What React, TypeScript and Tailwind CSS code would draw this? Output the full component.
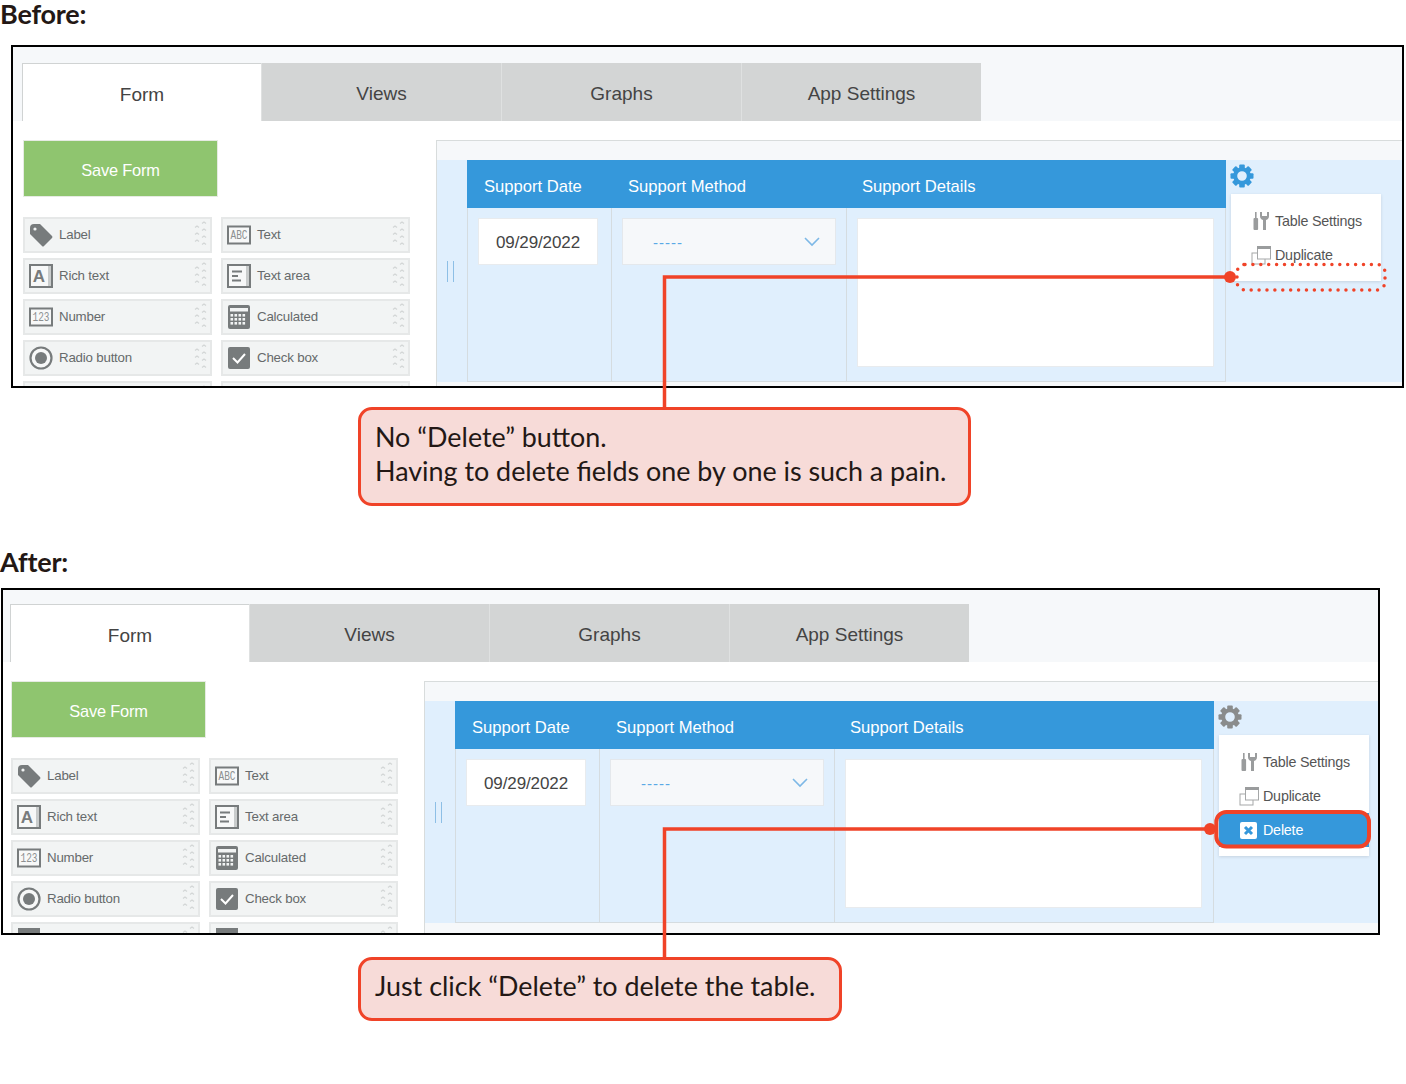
import React from "react";

const ui = { fontFamily: '"Liberation Sans", Arial, sans-serif' };
const note = { fontFamily: 'Lato, "Open Sans", sans-serif' };
const ICON = "#777b7c";

function Gear({ color }: { color: string }) {
  return (
    <svg width="26" height="26" viewBox="0 0 26 26">
      {[0, 45, 90, 135, 180, 225, 270, 315].map((a) => (
        <rect key={a} x="10.2" y="1.5" width="5.6" height="6" rx="1" fill={color} transform={`rotate(${a} 13 13)`} />
      ))}
      <circle cx="13" cy="13" r="6.8" fill="none" stroke={color} strokeWidth="4" />
    </svg>
  );
}

function FieldIcon({ kind }: { kind: string }) {
  const frame = (inner: React.ReactNode, h = 24) => (
    <svg width="24" height="24" viewBox="0 0 24 24">
      <rect x="1" y={(24 - h) / 2 + 1} width="22" height={h - 2} fill="#f7f8f8" stroke={ICON} strokeWidth="2" />
      {inner}
    </svg>
  );
  const small = { fontFamily: '"Liberation Mono", monospace', fontSize: 12, fill: "#8d9091" };
  switch (kind) {
    case "label":
      return (
        <svg width="24" height="24" viewBox="0 0 24 24">
          <path d="M1 5 Q1 1 5 1 L11 1 L23 13 Q24 14 23 15 L15 23 Q14 24 13 23 L1 11 Z" fill={ICON} />
          <circle cx="6" cy="6" r="1.6" fill="#f2f4f4" />
        </svg>
      );
    case "abc":
      return frame(<text x="12" y="16" textAnchor="middle" style={small} textLength="17" lengthAdjust="spacingAndGlyphs">ABC</text>, 19);
    case "a":
      return frame(
        <>
          <rect x="19" y="2" width="3" height="20" fill="#c9cccc" />
          <text x="10" y="18" textAnchor="middle" style={{ ...ui, fontSize: 17, fontWeight: 700, fill: ICON }}>A</text>
        </>
      );
    case "123":
      return frame(<text x="12" y="16" textAnchor="middle" style={small} textLength="17" lengthAdjust="spacingAndGlyphs">123</text>, 19);
    case "area":
      return frame(
        <>
          <rect x="19" y="2" width="3" height="20" fill="#c9cccc" />
          <path d="M5 7.5H15M5 12H11M5 16.5H14" stroke={ICON} strokeWidth="1.8" />
        </>
      );
    case "calc":
      return (
        <svg width="24" height="24" viewBox="0 0 24 24">
          <rect x="1" y="0" width="22" height="24" rx="2" fill={ICON} />
          <rect x="3" y="3" width="18" height="3.5" fill="#f2f4f4" />
          {[9, 13, 17].map((y) =>
            [3.5, 7.5, 11.5, 15.5].map((x) => (
              <rect key={`${x}-${y}`} x={x} y={y} width="2.6" height="2.6" fill="#f2f4f4" />
            ))
          )}
        </svg>
      );
    case "radio":
      return (
        <svg width="24" height="24" viewBox="0 0 24 24">
          <circle cx="12" cy="12" r="10.5" fill="#f7f8f8" stroke={ICON} strokeWidth="2.2" />
          <circle cx="12" cy="12" r="6" fill={ICON} />
        </svg>
      );
    case "check":
      return (
        <svg width="24" height="24" viewBox="0 0 24 24">
          <rect x="1" y="1" width="22" height="22" rx="2" fill={ICON} />
          <path d="M6 12L10.5 16.5L18 8" fill="none" stroke="#fff" strokeWidth="2" />
        </svg>
      );
    default:
      return (
        <svg width="24" height="24" viewBox="0 0 24 24">
          <rect x="1" y="0" width="22" height="24" fill={ICON} />
        </svg>
      );
  }
}

function Grip() {
  return (
    <svg width="13" height="28" viewBox="0 0 13 28" fill="none" stroke="#d3d6d6" strokeWidth="1.2">
      {[5, 12, 19].map((y) => (
        <path key={`l${y}`} d={`M1 ${y + 1.5}L3 ${y}L5 ${y + 1.5}`} />
      ))}
      {[1, 8, 15, 22].map((y) => (
        <path key={`r${y}`} d={`M8 ${y + 1.5}L10 ${y}L12 ${y + 1.5}`} />
      ))}
    </svg>
  );
}

function Field({ kind, label }: { kind: string; label: string }) {
  return (
    <div className="flex h-[36px] items-center border-2 border-[#e6e8e8] bg-[#f2f4f4] pl-[4px] pr-[3px]">
      <div className="h-[24px] w-[24px] shrink-0">
        <FieldIcon kind={kind} />
      </div>
      <span className="ml-[6px] flex-1 text-[13.3px] tracking-[-0.2px] text-[#666a6b]">{label}</span>
      <Grip />
    </div>
  );
}

const fields = [
  ["label", "Label"],
  ["abc", "Text"],
  ["a", "Rich text"],
  ["area", "Text area"],
  ["123", "Number"],
  ["calc", "Calculated"],
  ["radio", "Radio button"],
  ["check", "Check box"],
  ["more", ""],
  ["more", ""],
];

function ToolsIcon() {
  return (
    <svg width="18" height="18" viewBox="0 0 18 18" fill="#9a9c9d">
      <rect x="3" y="0" width="1.6" height="6" />
      <rect x="1.5" y="6" width="4.6" height="12" rx="1" />
      <path d="M8 0V4Q8 7 11 8V18H14V8Q17 7 17 4V0L15 0V4H10V0Z" />
    </svg>
  );
}

function DupIcon() {
  return (
    <svg width="20" height="19" viewBox="0 0 20 19" fill="none">
      <rect x="1" y="7" width="13" height="11" fill="#fff" stroke="#a5a7a8" />
      <rect x="6.5" y="1" width="13" height="12" fill="#fff" stroke="#a5a7a8" />
      <rect x="6" y="0" width="14" height="3" fill="#9a9c9d" />
    </svg>
  );
}

function DeleteIcon() {
  return (
    <svg width="17" height="17" viewBox="0 0 17 17">
      <rect width="17" height="17" rx="2" fill="#fff" />
      <path d="M5 5L12 12M12 5L5 12" stroke="#3598db" strokeWidth="3" />
    </svg>
  );
}

function Frame({ after, className }: { after: boolean; className: string }) {
  const tab = "flex h-[58px] items-center justify-center pt-[5px] text-[19px] text-[#444]";
  const item = "flex h-[34px] items-center text-[14.3px] tracking-[-0.2px]";
  return (
    <div className={`overflow-hidden border-2 border-black bg-white ${className}`} style={ui}>
      <div className={`flex items-end bg-[#f6f8fa] ${after ? "h-[72px] pl-[7px]" : "h-[74px] pl-[9px]"}`}>
        <div className={`${tab} w-[239px] border-l border-t border-[#d0d3d3] bg-white`}>Form</div>
        {["Views", "Graphs", "App Settings"].map((t) => (
          <div key={t} className={`${tab} w-[240px] border-l border-[#dfe1e1] bg-[#d3d5d5]`}>
            {t}
          </div>
        ))}
      </div>
      <div className={`flex ${after ? "pl-[8px]" : "pl-[10px]"}`}>
        <div className="w-[413px] shrink-0 pt-[19px]">
          <div className="flex h-[57px] w-[195px] items-center justify-center border border-[#e6ebe3] bg-[#8fc56f] pt-[3px] text-[16.4px] tracking-[-0.2px] text-white">
            Save Form
          </div>
          <div className="mt-[20px] grid w-[387px] grid-cols-[189px_189px] gap-x-[9px] gap-y-[5px]">
            {fields.map(([k, l], i) => (
              <Field key={i} kind={k} label={l} />
            ))}
          </div>
        </div>
        <div className="mt-[19px] min-w-0 flex-1 border-l border-t border-[#d8dcdc] bg-[#f6f8fa]">
          <div className="h-[19px]" />
          <div className="flex h-[222px] bg-[#e0effd]">
            <div className="flex w-[30px] shrink-0 gap-[5px] pl-[10px] pt-[101px]">
              <div className="h-[21px] w-px bg-[#8dbfe6]" />
              <div className="h-[21px] w-px bg-[#8dbfe6]" />
            </div>
            <div className="w-[759px] shrink-0">
              <div className="flex h-[48px] items-center bg-[#3598db] pt-[7px] text-[16.6px] text-white">
                <span className="w-[144px] shrink-0 pl-[17px]">Support Date</span>
                <span className="w-[235px] shrink-0 pl-[17px]">Support Method</span>
                <span className="pl-[16px]">Support Details</span>
              </div>
              <div className="flex h-[174px] border-x border-b border-[#d5dce0]">
                <div className="w-[144px] shrink-0 border-r border-[#d5dce0] pl-[10px] pt-[10px]">
                  <div className="flex h-[47px] w-[120px] items-center justify-center border border-[#e8ebee] bg-white pt-[3px] text-[17px] tracking-[-0.1px] text-[#444]">
                    09/29/2022
                  </div>
                </div>
                <div className="w-[235px] shrink-0 border-r border-[#d5dce0] pl-[10px] pt-[10px]">
                  <div className="flex h-[47px] w-[214px] items-center justify-between border border-[#e4e8ec] bg-[#f6f8fa] pl-[30px] pr-[15px]">
                    <span className="pt-[4px] text-[15px] tracking-[1px] text-[#5aa9e6]">-----</span>
                    <svg width="16" height="10" viewBox="0 0 16 10" fill="none" stroke="#7db8e6" strokeWidth="1.6">
                      <path d="M1 1L8 8L15 1" />
                    </svg>
                  </div>
                </div>
                <div className="ml-[10px] mt-[10px] h-[149px] w-[357px] border border-[#e8ebee] bg-white" />
              </div>
            </div>
            <div className="ml-[5px] w-[150px] shrink-0">
              <div className="-ml-[2px] mt-[3px] h-[26px]">
                <Gear color={after ? "#8a8c8c" : "#3598db"} />
              </div>
              <div className="mt-[5px] bg-white pb-[9px] pt-[10px] shadow-[0_1px_3px_rgba(0,0,0,0.12)]">
                <div className={`${item} pl-[21px] text-[#555]`}>
                  <ToolsIcon />
                  <span className="ml-[5px] pt-[2px]">Table Settings</span>
                </div>
                <div className={`${item} pl-[20px] text-[#555]`}>
                  <DupIcon />
                  <span className="ml-[4px] pt-[2px]">Duplicate</span>
                </div>
                {after && (
                  <div className={`${item} bg-[#3598db] pl-[21px] text-white`}>
                    <DeleteIcon />
                    <span className="ml-[6px] pt-[2px]">Delete</span>
                  </div>
                )}
              </div>
            </div>
          </div>
        </div>
      </div>
    </div>
  );
}

function Callout({ className, children }: { className: string; children: React.ReactNode }) {
  return (
    <div
      className={`rounded-[14px] border-[3.5px] border-[#f04328] bg-[#f7dbd8] pl-[14px] text-[26.9px] leading-[34px] text-[#231815] ${className}`}
      style={note}
    >
      {children}
    </div>
  );
}

export default function App() {
  const red = "#f04328";
  const h2 = "h-[28px] text-[27px] font-bold leading-[28px] tracking-[-0.2px] text-[#231815]";
  return (
    <div className="relative h-[1084px] w-[1406px] overflow-hidden bg-white">
      <h2 className={`mb-[17px] ${h2}`} style={note}>
        Before:
      </h2>
      <Frame after={false} className="ml-[11px] h-[343px] w-[1393px]" />
      <Callout className="ml-[358px] mt-[19px] h-[99px] w-[613px] pt-[10px]">
        No “Delete” button.
        <br />
        Having to delete fields one by one is such a pain.
      </Callout>
      <h2 className={`mb-[12px] mt-[42px] ${h2}`} style={note}>
        After:
      </h2>
      <Frame after className="ml-[1px] h-[347px] w-[1379px]" />
      <Callout className="ml-[358px] mt-[22px] h-[64px] w-[484px] pt-[9px]">
        Just click “Delete” to delete the table.
      </Callout>

      <svg className="pointer-events-none absolute left-0 top-0" width="1406" height="1084" fill="none">
        <path d="M1230 277H664.5V408" stroke={red} strokeWidth="3.5" />
        <circle cx="1230" cy="277" r="6" fill={red} />
        <rect x="1237" y="264.5" width="148" height="25.5" rx="8" stroke={red} strokeWidth="3.5" strokeLinecap="round" strokeDasharray="0 7.9" />
        <path d="M1210 829H664.5V958" stroke={red} strokeWidth="3.5" />
        <circle cx="1210" cy="829" r="6" fill={red} />
        <rect x="1216.3" y="812" width="152.7" height="34.5" rx="10" stroke={red} strokeWidth="4" />
      </svg>
    </div>
  );
}
